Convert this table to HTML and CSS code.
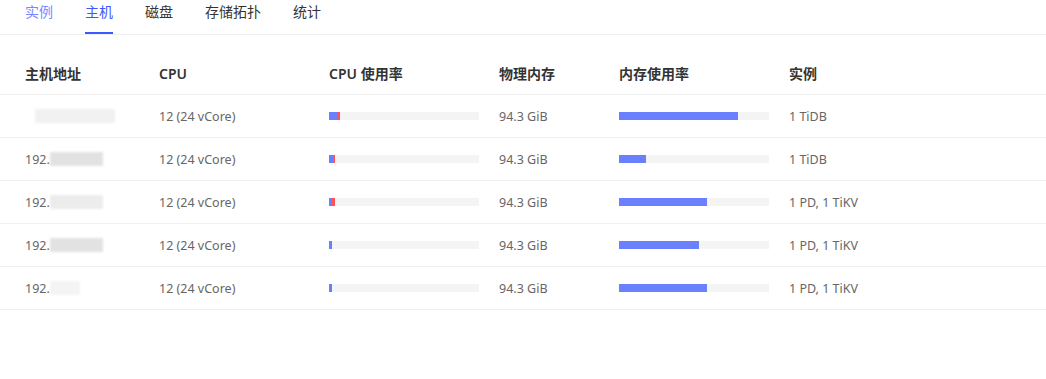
FILE: index.html
```html
<!DOCTYPE html>
<html lang="zh">
<head>
<meta charset="utf-8">
<link rel="stylesheet" href="styles.css">
</head>
<body>
<div class="tabs">
  <div class="tab hover">实例</div>
  <div class="tab active">主机</div>
  <div class="tab">磁盘</div>
  <div class="tab">存储拓扑</div>
  <div class="tab">统计</div>
</div>
<div class="table">
  <div class="row head">
    <div>主机地址</div><div>CPU</div><div>CPU 使用率</div><div>物理内存</div><div>内存使用率</div><div>实例</div>
  </div>
  <div class="row">
    <div class="ip"><span class="mask m1"></span></div>
    <div>12 (24 vCore)</div>
    <div class="bar"><span class="u" style="width:9px"></span><span class="s" style="width:2px"></span></div>
    <div>94.3 GiB</div>
    <div class="bar"><span class="u" style="width:119px"></span></div>
    <div>1 TiDB</div>
  </div>
  <div class="row">
    <div class="ip">192.<span class="mask"></span></div>
    <div>12 (24 vCore)</div>
    <div class="bar"><span class="u" style="width:5px"></span><span class="s" style="width:1px"></span></div>
    <div>94.3 GiB</div>
    <div class="bar"><span class="u" style="width:27px"></span></div>
    <div>1 TiDB</div>
  </div>
  <div class="row">
    <div class="ip">192.<span class="mask m2"></span></div>
    <div>12 (24 vCore)</div>
    <div class="bar"><span class="u" style="width:3px"></span><span class="s" style="width:3px"></span></div>
    <div>94.3 GiB</div>
    <div class="bar"><span class="u" style="width:88px"></span></div>
    <div>1 PD, 1 TiKV</div>
  </div>
  <div class="row">
    <div class="ip">192.<span class="mask"></span></div>
    <div>12 (24 vCore)</div>
    <div class="bar"><span class="u" style="width:2px"></span><span class="s" style="width:1px"></span></div>
    <div>94.3 GiB</div>
    <div class="bar"><span class="u" style="width:80px"></span></div>
    <div>1 PD, 1 TiKV</div>
  </div>
  <div class="row">
    <div class="ip">192.<span class="mask m3"></span></div>
    <div>12 (24 vCore)</div>
    <div class="bar"><span class="u" style="width:2px"></span><span class="s" style="width:1px"></span></div>
    <div>94.3 GiB</div>
    <div class="bar"><span class="u" style="width:88px"></span></div>
    <div>1 PD, 1 TiKV</div>
  </div>
</div>
</body>
</html>
```
FILE: styles.css
```css
* { box-sizing: border-box; }
body {
  margin: 0;
  background: #fff;
  font-family: "Noto Sans", "Noto Sans CJK SC", sans-serif;
  color: #666;
}
.tabs {
  display: flex;
  gap: 32px;
  padding: 0 25px;
  height: 35px;
  border-bottom: 1px solid #efefef;
}
.tab {
  font-size: 14px;
  color: #333;
  height: 34px;
  padding-top: 1px;
  line-height: 22px;
}
.tab.hover { color: #7889ff; }
.tab.active {
  color: #3c59ff;
  border-bottom: 2px solid #3c59ff;
}
.table { margin-top: 17px; }
.row {
  display: grid;
  grid-template-columns: 134px 170px 170px 120px 170px 1fr;
  align-items: center;
  height: 43px;
  padding-left: 25px;
  border-bottom: 1px solid #efefef;
  font-size: 12.5px;
  color: #666;
}
.row.head {
  font-size: 14px;
  font-weight: 600;
  color: #333;
}
.bar {
  display: flex;
  width: 150px;
  height: 8px;
  background: #f4f4f4;
}
.bar .u { background: #6b80ff; height: 100%; }
.bar .s { background: #ff5252; height: 100%; }
.ip { display: flex; align-items: center; }
.mask {
  display: inline-block;
  width: 53px;
  height: 14px;
  background: #dcdcdc;
  opacity: 0.8;
  filter: blur(1px);
}
.mask.m1 { width: 80px; margin-left: 10px; background: #eeeeee; }
.mask.m2 { background: #e8e8e8; }
.mask.m3 { width: 30px; background: #f2f2f2; }
```
